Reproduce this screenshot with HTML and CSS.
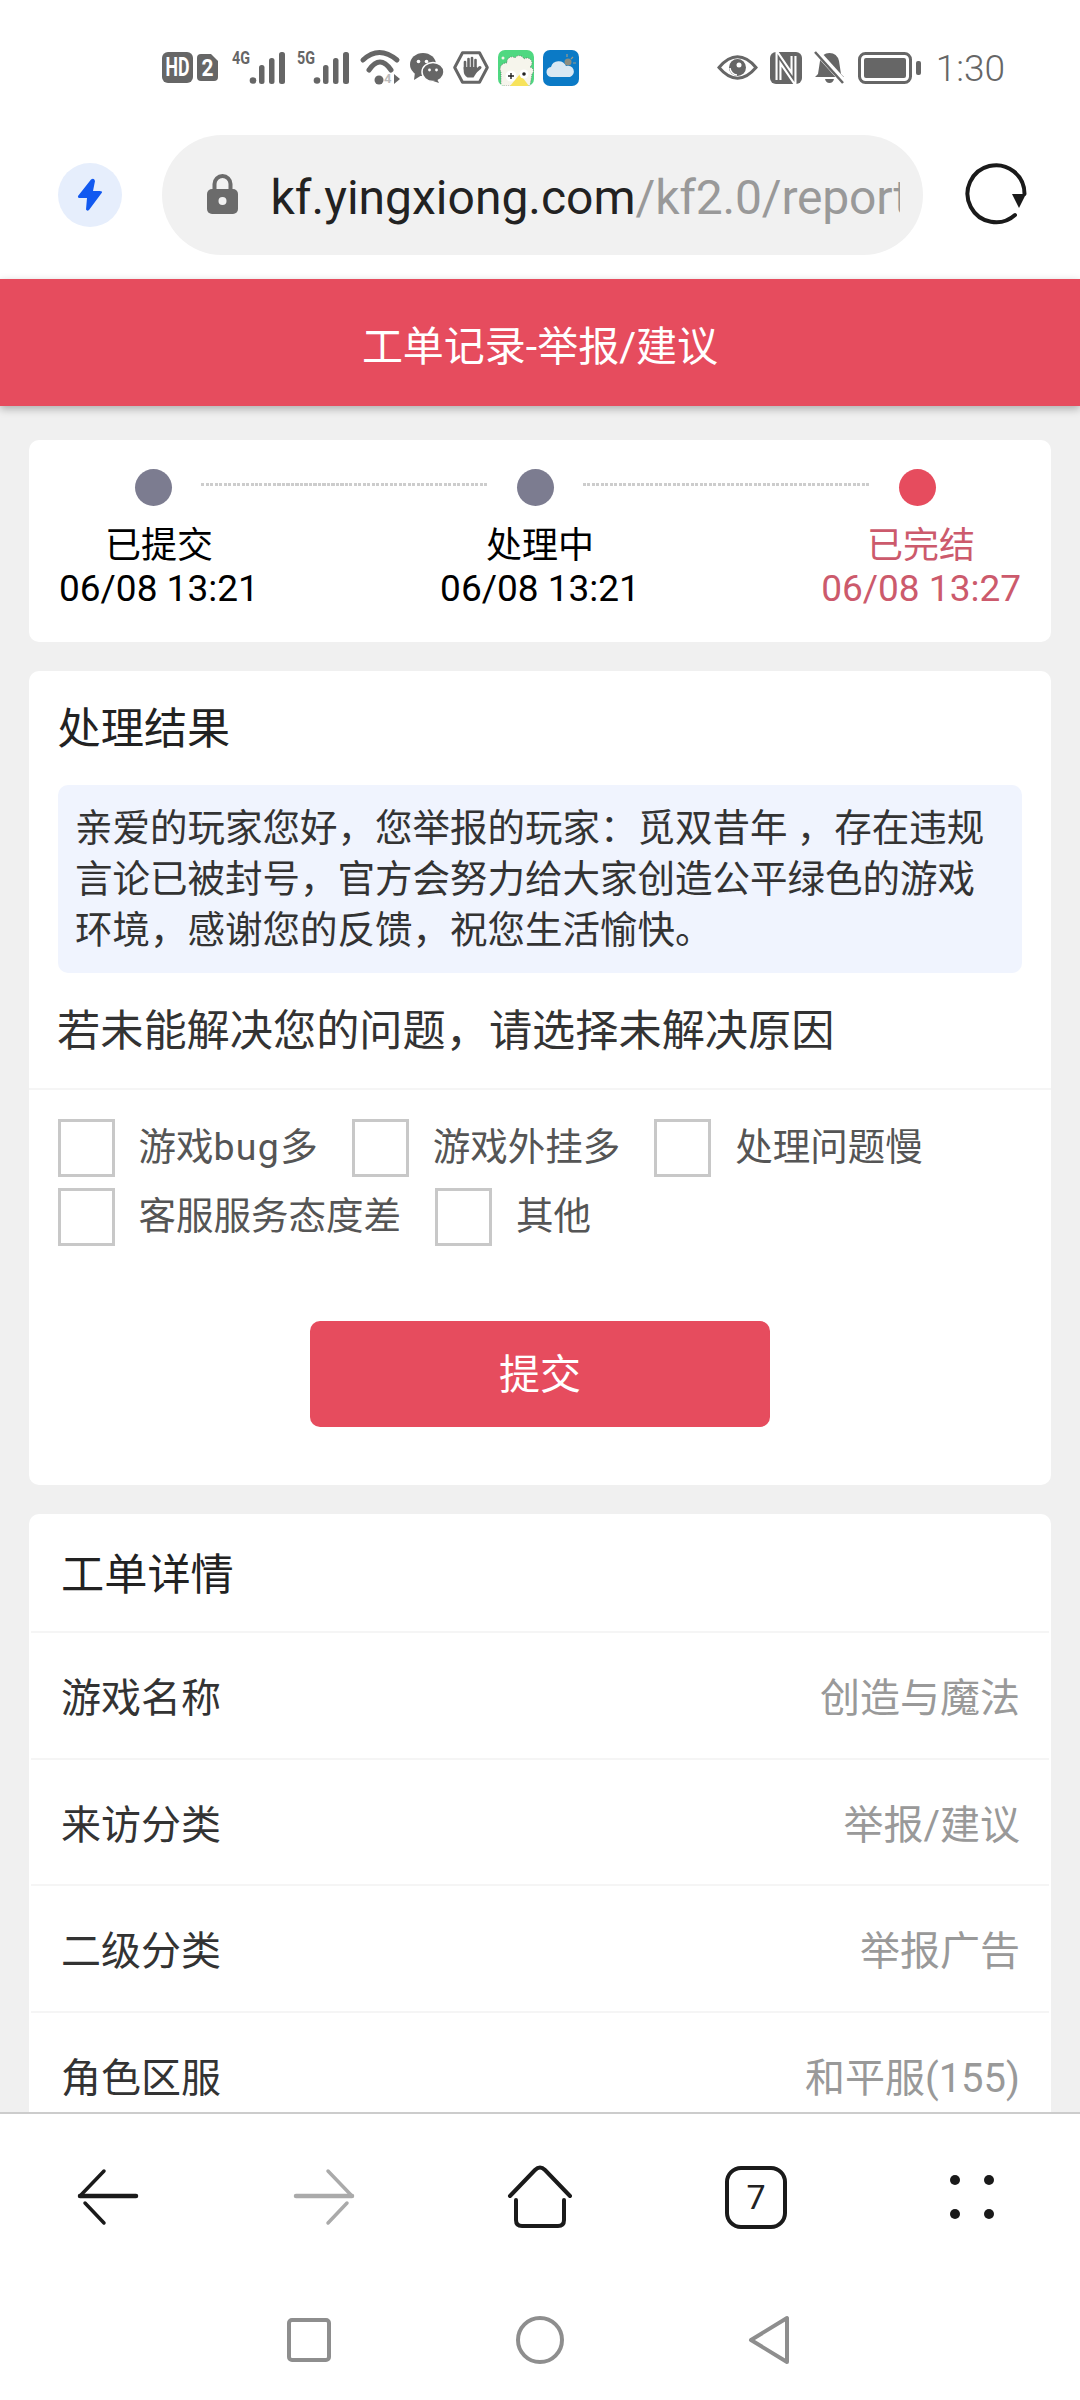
FILE: index.html
```html
<!DOCTYPE html>
<html lang="zh-CN">
<head>
<meta charset="utf-8">
<title>工单记录-举报/建议</title>
<link rel="stylesheet" href="styles.css">
</head>
<body>
<div class="statusbar">
  <div class="status-left">
    <svg class="s-ic" width="31" height="31" viewBox="0 0 31 31"><rect width="31" height="31" rx="6" fill="#666"/><text x="15.5" y="24" text-anchor="middle" class="svgt hd" textLength="24" lengthAdjust="spacingAndGlyphs">HD</text></svg>
    <svg class="s-ic ml4" width="21" height="27" viewBox="0 0 21 27"><path d="M4 0H14L21 7V23Q21 27 17 27H4Q0 27 0 23V4Q0 0 4 0Z" fill="#666"/><text x="10.5" y="22" text-anchor="middle" class="svgt sim" textLength="12" lengthAdjust="spacingAndGlyphs">2</text></svg>
    <svg class="s-ic ml14" width="54" height="34" viewBox="0 0 54 34"><text x="0" y="13" class="svgt net" textLength="18" lengthAdjust="spacingAndGlyphs">4G</text><g fill="#666"><circle cx="21" cy="29.500" r="3.300"/><rect x="27" y="14" width="5.500" height="19" rx="2.500"/><rect x="37" y="7" width="5.500" height="26" rx="2.500"/><rect x="47" y="1" width="6" height="32" rx="2.500"/></g></svg>
    <svg class="s-ic ml11" width="53" height="34" viewBox="0 0 53 34"><text x="0" y="13" class="svgt net" textLength="18" lengthAdjust="spacingAndGlyphs">5G</text><g fill="#666"><circle cx="20" cy="29.500" r="3.300"/><rect x="26" y="14" width="5.500" height="19" rx="2.500"/><rect x="36" y="7" width="5.500" height="26" rx="2.500"/><rect x="46" y="1" width="6" height="32" rx="2.500"/></g></svg>
    <svg class="s-ic ml10" width="41" height="34" viewBox="0 0 41 34"><g fill="none" stroke="#666" stroke-width="5" stroke-linecap="round"><path d="M3 9Q19 -6 37 9"/><path d="M9 19Q20 3 31 19"/></g><circle cx="19" cy="29" r="4.500" fill="#666"/><text x="24" y="32" class="svgt mini">4</text><path d="M34 23V33L40 28Z" fill="#666"/></svg>
    <svg class="s-ic ml9" width="33" height="30" viewBox="0 0 33 30"><ellipse cx="13" cy="11.500" rx="13" ry="11.500" fill="#666"/><path d="M5 19L4 27L12 22Z" fill="#666"/><ellipse cx="23" cy="19" rx="11" ry="9.500" fill="#666" stroke="#fff" stroke-width="1.500"/><path d="M27 26L29 30L23 28Z" fill="#666"/><g fill="#fff"><circle cx="8.500" cy="8.500" r="1.800"/><circle cx="16.500" cy="8.500" r="1.800"/><circle cx="19.500" cy="17" r="1.400"/><circle cx="26.500" cy="17" r="1.400"/></g></svg>
    <svg class="s-ic ml10" width="36" height="33" viewBox="0 0 36 33"><path d="M1.700 16.500L9.500 1.700H26.500L34.300 16.500L26.500 31.300H9.500Z" fill="none" stroke="#666" stroke-width="3" stroke-linejoin="round"/><g stroke="#666" stroke-width="2.600" stroke-linecap="round"><path d="M12 11V18"/><path d="M15.500 8V18"/><path d="M19 7V18"/><path d="M22.500 9V18"/><path d="M23 20L27 16.500" stroke-width="3"/></g><path d="M10.700 16H24V21L20.500 26.500H14.500Q10.700 24 10.700 20Z" fill="#666"/></svg>
    <svg class="s-ic ml9" width="36" height="36" viewBox="0 0 36 36"><defs><clipPath id="gc"><rect width="36" height="36" rx="7"/></clipPath></defs><g clip-path="url(#gc)"><rect width="36" height="36" fill="#4fd881"/><path d="M3 36V22a6 6 0 0 1 6 -9a5 5 0 0 1 8 -5a5 5 0 0 1 9 1a5 5 0 0 1 6 8a4 4 0 0 1 2 7L32 36Z" fill="#f6f5ec" stroke="#666" stroke-width=".7" stroke-dasharray="1 1.200"/><path d="M12 36L22 24L31 36Z" fill="#f7e35c"/><circle cx="13" cy="26" r="5.500" fill="#fff"/><circle cx="26" cy="24" r="4.500" fill="#fff"/><path d="M10 26H16M13 23V29" stroke="#222" stroke-width="1.400"/><circle cx="26" cy="24" r="1.800" fill="#222"/><circle cx="5" cy="8" r="1.500" fill="#f4f3ea"/></g></svg>
    <svg class="s-ic ml9" width="36" height="36" viewBox="0 0 36 36"><rect width="36" height="36" rx="7" fill="#0b7ac6"/><circle cx="25" cy="12" r="3.500" fill="#8d8d80"/><path d="M24 4V7M30 7L28 9M33 13H30" stroke="#9a9a8c" stroke-width="1.200"/><path d="M9 27a5 5 0 0 1 -1 -10a8 8 0 0 1 15 -1a5.500 5.500 0 0 1 4 11Z" fill="#d9e8f3"/></svg>
  </div>
  <div class="status-right">
    <svg class="s-ic" width="41" height="25" viewBox="0 0 41 25"><path d="M2 12.500Q11 1.800 20.500 1.800T39 12.500Q30 23.200 20.500 23.200T2 12.500Z" fill="none" stroke="#666" stroke-width="3"/><circle cx="20.500" cy="12.500" r="8.500" fill="#666"/><path d="M13 13A7.500 7.500 0 0 0 20 20" fill="none" stroke="#fff" stroke-width="1.500"/><circle cx="22" cy="10" r="2.500" fill="#fff"/></svg>
    <svg class="s-ic ml12" width="32" height="32" viewBox="0 0 32 32"><rect width="32" height="32" rx="6" fill="#666"/><path d="M8.500 28V5L23.500 27V4" fill="none" stroke="#fff" stroke-width="6"/><path d="M8.500 28V5L23.500 27V4" fill="none" stroke="#666" stroke-width="1.800"/></svg>
    <svg class="s-ic ml12" width="31" height="33" viewBox="0 0 31 33"><path d="M15.500 2Q23 2 25 10L27 23L30 26H1L4 23L6 10Q8 2 15.500 2Z" fill="#666"/><path d="M11 28H20Q19 32 15.500 32T11 28Z" fill="#666"/><path d="M2 0L30 31" stroke="#fff" stroke-width="6"/><path d="M1 1L29 32" stroke="#666" stroke-width="2.500"/></svg>
    <svg class="s-ic ml13" width="63" height="32" viewBox="0 0 63 32"><rect x="1.500" y="1.500" width="51" height="29" rx="6" fill="none" stroke="#666" stroke-width="3"/><rect x="6" y="6" width="42" height="20" rx="2" fill="#666"/><rect x="58" y="9" width="5" height="14" rx="2" fill="#666"/></svg>
    <span class="clock">1:30</span>
  </div>
</div>

<div class="browserbar">
  <div class="shield">
    <svg width="64" height="64" viewBox="0 0 64 64"><path d="M33 16.500L20 33Q19.500 35 22 35H29L28 46.500Q29 48.500 31 47L44 29.500Q44.500 28 42 28H35L37 18Q36 14.500 33 16.500Z" fill="#1259f0"/></svg>
  </div>
  <div class="urlpill">
    <svg class="lock" width="31" height="40" viewBox="0 0 31 40"><path d="M7.500 17V10a8 8 0 0 1 16 0V17" fill="none" stroke="#6b6b6b" stroke-width="4"/><rect y="15" width="31" height="25" rx="5" fill="#6b6b6b"/><circle cx="15.500" cy="27" r="4" fill="#f1f1f1"/></svg>
    <div class="url"><span class="url-host">kf.yingxiong.com</span><span class="url-path">/kf2.0/report</span></div>
  </div>
  <svg class="reload" width="62" height="62" viewBox="0 0 62 62"><path d="M50 50A28.500 28.500 0 1 1 59.500 29" fill="none" stroke="#1a1a1a" stroke-width="4" stroke-linecap="round"/><path d="M47 29H61L54 43Z" fill="#1a1a1a"/></svg>
</div>

<header class="titlebar">工单记录-举报/建议</header>

<main class="page">
  <section class="card progress">
    <div class="track">
      <span class="dot"></span><span class="dash"></span><span class="dot"></span><span class="dash"></span><span class="dot dot-on"></span>
    </div>
    <div class="steps">
      <div class="step"><div class="step-name">已提交</div><div class="step-time">06/08 13:21</div></div>
      <div class="step"><div class="step-name">处理中</div><div class="step-time">06/08 13:21</div></div>
      <div class="step step-on"><div class="step-name">已完结</div><div class="step-time">06/08 13:27</div></div>
    </div>
  </section>

  <section class="card result">
    <h2 class="result-title">处理结果</h2>
    <p class="notice">亲爱的玩家您好，您举报的玩家：觅双昔年 ，存在违规言论已被封号，官方会努力给大家创造公平绿色的游戏环境，感谢您的反馈，祝您生活愉快。</p>
    <h3 class="question">若未能解决您的问题，请选择未解决原因</h3>
    <div class="options">
      <label class="option"><span class="box"></span><span class="opt-text">游戏<span class="latin">bug</span>多</span></label>
      <label class="option"><span class="box"></span><span class="opt-text">游戏外挂多</span></label>
      <label class="option"><span class="box"></span><span class="opt-text">处理问题慢</span></label>
      <label class="option"><span class="box"></span><span class="opt-text">客服服务态度差</span></label>
      <label class="option"><span class="box"></span><span class="opt-text">其他</span></label>
    </div>
    <div class="submit-wrap"><button class="submit" type="button">提交</button></div>
  </section>

  <section class="card details">
    <h2 class="details-title">工单详情</h2>
    <div class="row"><span class="row-key">游戏名称</span><span class="row-val">创造与魔法</span></div>
    <div class="row"><span class="row-key">来访分类</span><span class="row-val">举报/建议</span></div>
    <div class="row"><span class="row-key">二级分类</span><span class="row-val">举报广告</span></div>
    <div class="row"><span class="row-key">角色区服</span><span class="row-val">和平服(155)</span></div>
  </section>
</main>

<footer class="bottom">
  <nav class="toolbar">
    <svg width="62" height="56" viewBox="0 0 62 56"><g fill="none" stroke="#1a1a1a" stroke-linecap="round"><path d="M27 2L3 27" stroke-width="3.500"/><path d="M3 27H59" stroke-width="4.500"/><path d="M8 34L27 54" stroke-width="3.500"/></g></svg>
    <svg width="62" height="56" viewBox="0 0 62 56"><g fill="none" stroke="#aaa" stroke-linecap="round"><path d="M35 2L59 27" stroke-width="3.500"/><path d="M59 27H3" stroke-width="4.500"/><path d="M54 34L35 54" stroke-width="3.500"/></g></svg>
    <svg width="66" height="64" viewBox="0 0 66 64"><g fill="none" stroke="#1a1a1a" stroke-width="4" stroke-linecap="round"><path d="M3 31L28 5Q33 0 38 5L63 31"/><path d="M9 35V55Q9 61 15 61H51Q57 61 57 55V35"/></g></svg>
    <svg width="62" height="63" viewBox="0 0 62 63"><rect x="2" y="2" width="58" height="59" rx="14" fill="none" stroke="#1a1a1a" stroke-width="4"/><text x="31" y="43" text-anchor="middle" class="svgt tabs">7</text></svg>
    <svg width="48" height="46" viewBox="0 0 48 46"><g fill="#1a1a1a"><circle cx="7" cy="6" r="5"/><circle cx="41" cy="6" r="5"/><circle cx="7" cy="40" r="5"/><circle cx="41" cy="40" r="5"/></g></svg>
  </nav>
  <nav class="sysnav">
    <svg width="44" height="44" viewBox="0 0 44 44"><rect x="2" y="2" width="40" height="40" rx="3" fill="none" stroke="#8e8e8e" stroke-width="4"/></svg>
    <svg width="48" height="48" viewBox="0 0 48 48"><circle cx="24" cy="24" r="22" fill="none" stroke="#8e8e8e" stroke-width="4"/></svg>
    <svg width="44" height="48" viewBox="0 0 44 48"><path d="M38 2V46L2 24Z" fill="none" stroke="#8e8e8e" stroke-width="4" stroke-linejoin="round"/></svg>
  </nav>
</footer>
</body>
</html>
```

FILE: styles.css
```css
* { box-sizing: border-box; }
html, body { margin: 0; padding: 0; }
body {
  width: 1080px;
  height: 2400px;
  overflow: hidden;
  display: flex;
  flex-direction: column;
  background: #f0f0f0;
  font-family: Roboto, "Noto Sans CJK SC", sans-serif;
  color: #222;
}
svg { display: block; flex: none; overflow: visible; }
.svgt { font-family: Roboto, "Liberation Sans", sans-serif; }
.hd { font-size: 25px; font-weight: 700; fill: #fff; }
.sim { font-size: 23px; font-weight: 700; fill: #fff; }
.net { font-size: 18px; font-weight: 700; fill: #666; }
.mini { font-size: 13px; font-weight: 700; fill: #bbb; }
.tabs { font-size: 34px; fill: #222; }

.statusbar {
  height: 135px;
  flex: none;
  background: #fff;
  display: flex;
  align-items: center;
  justify-content: space-between;
  padding: 0 75px 0 162px;
}
.status-left, .status-right { display: flex; align-items: center; }
.ml4 { margin-left: 4px; }
.ml9 { margin-left: 9px; }
.ml10 { margin-left: 10px; }
.ml11 { margin-left: 11px; }
.ml12 { margin-left: 12px; }
.ml13 { margin-left: 13px; }
.ml14 { margin-left: 14px; }
.clock {
  margin-left: 15px;
  padding-top: 3px;
  font-size: 37px;
  font-weight: 300;
  color: #666;
  line-height: 40px;
}

.browserbar {
  height: 144px;
  flex: none;
  background: #fff;
  display: flex;
  align-items: flex-start;
  padding-left: 58px;
}
.shield {
  width: 64px;
  height: 64px;
  margin-top: 28px;
  border-radius: 50%;
  background: #e6eefc;
}
.urlpill {
  width: 761px;
  height: 120px;
  margin-left: 40px;
  border-radius: 60px;
  background: #f1f1f1;
  display: flex;
  align-items: center;
  padding: 0 23px 0 45px;
}
.lock { margin-top: -2px; }
.url {
  flex: 1;
  min-width: 0;
  margin: 6px 0 0 32.500px;
  overflow: hidden;
  white-space: nowrap;
  font-size: 48px;
  line-height: 70px;
}
.url-host { color: #222; }
.url-path { color: #999; letter-spacing: -.2px; }
.reload { margin: 30px 0 0 42px; }

.titlebar {
  height: 127px;
  flex: none;
  position: relative;
  padding-top: 9px;
  background: #e64c5e;
  box-shadow: 0 3px 8px rgba(0, 0, 0, .28);
  color: #fff;
  font-size: 41px;
  line-height: 118px;
  text-align: center;
}

.page {
  flex: 1;
  min-height: 0;
  overflow: hidden;
  padding: 34px 29px 0;
}
.card {
  background: #fff;
  border-radius: 10px;
}

.progress { height: 202px; padding-top: 29px; }
.track { display: flex; align-items: flex-start; padding-left: 106px; }
.dot { width: 37px; height: 37px; border-radius: 50%; background: #7c7c90; }
.dot-on { background: #e64c5e; }
.dash {
  width: 287px;
  height: 3px;
  margin: 14px 29px 0;
  background: repeating-linear-gradient(90deg, #cdcdcd 0 3px, transparent 3px 4.500px);
}
.steps { display: flex; justify-content: space-between; padding: 19px 30px 0 30px; }
.step { text-align: center; color: #000; }
.step-on { color: #cc5a6c; }
.step-name { font-size: 36px; line-height: 43px; }
.step-time { font-size: 37px; line-height: 42px; }

.result { margin-top: 29px; height: 814px; }
.result-title, .question, .details-title { margin: 0; font-weight: 400; font-size: 43.200px; line-height: 46px; }
.result-title { padding: 36px 28.500px 0; color: #222; }
.notice {
  margin: 32px 29px 0;
  padding: 17.500px 17px;
  border-radius: 10px;
  background: #f0f4fe;
  color: #333;
  font-size: 37.500px;
  line-height: 51px;
}
.question {
  padding: 36px 28px 33px;
  border-bottom: 2px solid #f5f5f5;
  color: #333;
}
.options {
  display: flex;
  flex-wrap: wrap;
  gap: 11px 34px;
  padding: 29px 28.500px 0;
}
.option {
  display: flex;
  align-items: center;
  gap: 24px;
  height: 58px;
  color: #555;
  font-size: 37.500px;
}
.opt-text { padding-bottom: 9px; }
.latin { letter-spacing: 1.300px; }
.box {
  width: 57px;
  height: 58px;
  border: 3px solid #c8c8c8;
  background: #fff;
}
.submit-wrap { display: flex; justify-content: center; margin-top: 75px; }
.submit {
  width: 460px;
  height: 106px;
  padding: 0 0 7px;
  border: 0;
  border-radius: 10px;
  background: #e64c5e;
  color: #fff;
  font-family: inherit;
  font-size: 41px;
}

.details { margin-top: 29px; height: 800px; }
.details-title { padding: 39px 32px 32px; color: #222; }
.row {
  height: 126.500px;
  margin: 0 2px;
  padding: 0 29px 0 30px;
  border-top: 2px solid #f5f5f5;
  display: flex;
  align-items: center;
  justify-content: space-between;
  font-size: 40px;
}
.row-key { color: #333; }
.row-val { color: #999; }

.bottom {
  flex: none;
  height: 288px;
  position: relative;
  background: #fff;
  border-top: 2px solid #ccc;
}
.toolbar {
  height: 166px;
  display: grid;
  grid-template-columns: repeat(5, 216px);
  justify-items: center;
  align-items: center;
}
.sysnav {
  height: 120px;
  display: grid;
  grid-template-columns: repeat(3, 231px);
  justify-content: center;
  justify-items: center;
  align-items: center;
}
```
